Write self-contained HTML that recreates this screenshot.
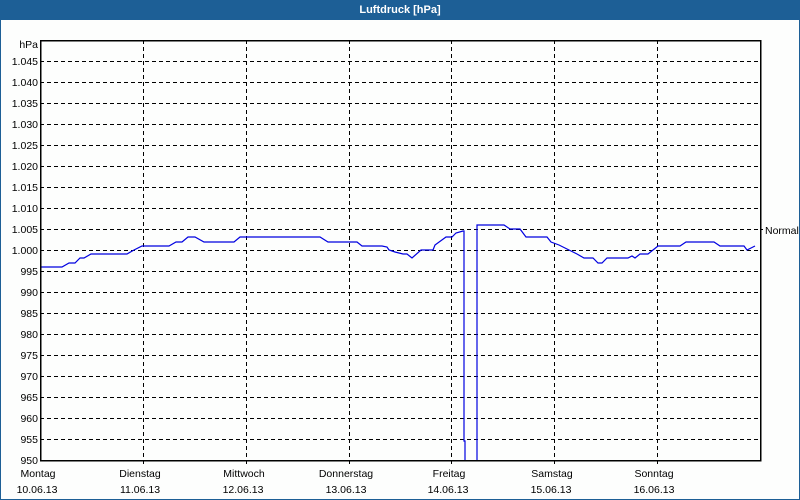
<!DOCTYPE html>
<html><head><meta charset="utf-8"><style>
html,body{margin:0;padding:0;background:#fff}
body{width:800px;height:500px;overflow:hidden;position:relative;font-family:"Liberation Sans",sans-serif}
.bar{position:absolute;left:0;top:0;width:800px;height:20px;background:#1d5f96;color:#fff;font-weight:bold;font-size:11px;text-align:center;line-height:20px}
.frame{position:absolute;left:0;top:20px;width:798px;height:479px;border:1px solid #1d5f96;border-top:none;background:#fdfefd}
svg{position:absolute;left:0;top:0}
</style></head><body>
<div class="frame"></div>
<div class="bar">Luftdruck [hPa]</div>
<svg width="800" height="500" font-family="Liberation Sans, sans-serif" font-size="10.5" fill="#000">
<defs><clipPath id="c"><rect x="40" y="40" width="720" height="420"/></clipPath></defs>
<g stroke="#000" stroke-width="1" stroke-dasharray="4,3" shape-rendering="crispEdges">
<line x1="40" x2="760" y1="61.5" y2="61.5"/><line x1="40" x2="760" y1="82.5" y2="82.5"/>
<line x1="40" x2="760" y1="103.5" y2="103.5"/><line x1="40" x2="760" y1="124.5" y2="124.5"/>
<line x1="40" x2="760" y1="145.5" y2="145.5"/><line x1="40" x2="760" y1="166.5" y2="166.5"/>
<line x1="40" x2="760" y1="187.5" y2="187.5"/><line x1="40" x2="760" y1="208.5" y2="208.5"/>
<line x1="40" x2="760" y1="229.5" y2="229.5"/><line x1="40" x2="760" y1="250.5" y2="250.5"/>
<line x1="40" x2="760" y1="271.5" y2="271.5"/><line x1="40" x2="760" y1="292.5" y2="292.5"/>
<line x1="40" x2="760" y1="313.5" y2="313.5"/><line x1="40" x2="760" y1="334.5" y2="334.5"/>
<line x1="40" x2="760" y1="355.5" y2="355.5"/><line x1="40" x2="760" y1="376.5" y2="376.5"/>
<line x1="40" x2="760" y1="397.5" y2="397.5"/><line x1="40" x2="760" y1="418.5" y2="418.5"/>
<line x1="40" x2="760" y1="439.5" y2="439.5"/>
<line x1="143.5" x2="143.5" y1="40" y2="464"/><line x1="246.5" x2="246.5" y1="40" y2="464"/>
<line x1="349.5" x2="349.5" y1="40" y2="464"/><line x1="451.5" x2="451.5" y1="40" y2="464"/>
<line x1="554.5" x2="554.5" y1="40" y2="464"/><line x1="657.5" x2="657.5" y1="40" y2="464"/>
</g>
<g clip-path="url(#c)">
<polyline fill="none" stroke="#0000e0" stroke-width="1.2" points="41,267 62,267 69,263 75,263 80,258 84,258 91,254 127,254 134,250 142,246 169,246 176,242 182,242 188,237 195,237 204,242 234,242 240,237 320,237 328,242 357,242 362,246 382,246 387,247 389,250 395,252 403,254 407,254 412,258 421,250 433,250 435,245 446,237 452,237 456,233 463,231 464,231 464,441 465,441 465,475"/>
<polyline fill="none" stroke="#0000e0" stroke-width="1.2" points="477,475 477,225 504,225 510,229 520,229 526,237 547,237 551,242 559,245 569,250 577,254 584,258 593,258 598,263 602,263 607,258 628,258 632,256 635,258 640,254 648,254 658,246 680,246 686,242 714,242 720,246 744,246 747,250 755,246"/>
</g>
<rect x="40.5" y="40.5" width="720" height="420" fill="none" stroke="#000" stroke-width="1.5" shape-rendering="crispEdges"/>
<line x1="760" x2="763" y1="229.5" y2="229.5" stroke="#000"/>
<g text-anchor="end">
<text x="38" y="48">hPa</text>
<text x="38" y="65">1.045</text><text x="38" y="86">1.040</text><text x="38" y="107">1.035</text>
<text x="38" y="128">1.030</text><text x="38" y="149">1.025</text><text x="38" y="170">1.020</text>
<text x="38" y="191">1.015</text><text x="38" y="212">1.010</text><text x="38" y="233">1.005</text>
<text x="38" y="254">1.000</text><text x="38" y="275">995</text><text x="38" y="296">990</text>
<text x="38" y="317">985</text><text x="38" y="338">980</text><text x="38" y="359">975</text>
<text x="38" y="380">970</text><text x="38" y="401">965</text><text x="38" y="422">960</text>
<text x="38" y="443">955</text><text x="38" y="464">950</text>
</g>
<text x="765" y="234">Normal</text>
<g text-anchor="middle">
<text x="38" y="477">Montag</text><text x="37" y="493">10.06.13</text>
<text x="140" y="477">Dienstag</text><text x="140" y="493">11.06.13</text>
<text x="244" y="477">Mittwoch</text><text x="243" y="493">12.06.13</text>
<text x="346" y="477">Donnerstag</text><text x="346" y="493">13.06.13</text>
<text x="449" y="477">Freitag</text><text x="448" y="493">14.06.13</text>
<text x="552" y="477">Samstag</text><text x="551" y="493">15.06.13</text>
<text x="654" y="477">Sonntag</text><text x="654" y="493">16.06.13</text>
</g>
</svg>
</body></html>
